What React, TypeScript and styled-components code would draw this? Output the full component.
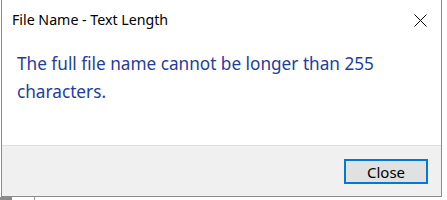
import React from 'react';
import styled, { createGlobalStyle } from 'styled-components';

const Global = createGlobalStyle`
  html, body {
    margin: 0;
    padding: 0;
    background: #ffffff;
  }
  body {
    font-family: 'Noto Sans', 'Open Sans', sans-serif;
  }
`;

const Page = styled.div`
  width: 447px;
  height: 200px;
  overflow: hidden;
  display: flex;
  flex-direction: column;
  background: #ffffff;
`;

const Dialog = styled.div`
  width: 441px;
  margin-left: 1px;
  height: 197px;
  box-sizing: border-box;
  border: 1px solid #8c8c8c;
  border-top: none;
  display: flex;
  flex-direction: column;
  background: #ffffff;
`;

const TitleBar = styled.div`
  height: 40px;
  display: flex;
  align-items: center;
  justify-content: space-between;
  padding: 0 14px 0 10px;
`;

const Title = styled.span`
  font-size: 14.2px;
  color: #000000;
  padding-bottom: 1px;
`;

const CloseX = styled.svg`
  width: 13px;
  height: 13px;
  display: block;
`;

const Body = styled.div`
  flex: 1;
  padding: 10px 20px 0 15px;
`;

const Instruction = styled.p`
  margin: 0;
  max-width: 380px;
  font-size: 17.2px;
  line-height: 28px;
  color: #1f3c9e;
`;

const Footer = styled.div`
  height: 50px;
  background: #f0f0f0;
  border-top: 1px solid #dfdfdf;
  display: flex;
  align-items: center;
  justify-content: flex-end;
  padding: 0 13px 0 0;
`;

const Button = styled.button`
  width: 84px;
  height: 25px;
  box-sizing: border-box;
  border: 2px solid #0078d7;
  background: #e1e1e1;
  font-family: inherit;
  font-size: 15px;
  color: #000000;
  padding: 0;
  margin-top: 1px;
`;

const Backdrop = styled.div`
  flex: 1;
  display: flex;
`;

const Strip = styled.div`
  width: 12px;
  background: #8a8a8a;
`;

const Gap = styled.div`
  width: 22px;
  border-right: 1px solid #9a9a9a;
`;

const App = () => (
  <>
    <Global />
    <Page>
      <Dialog>
        <TitleBar>
          <Title>File Name - Text Length</Title>
          <CloseX viewBox="0 0 13 13">
            <path d="M0.5 0.5 L12.5 12.5 M12.5 0.5 L0.5 12.5" stroke="#000" strokeWidth="1" fill="none" />
          </CloseX>
        </TitleBar>
        <Body>
          <Instruction>The full file name cannot be longer than 255 characters.</Instruction>
        </Body>
        <Footer>
          <Button>Close</Button>
        </Footer>
      </Dialog>
      <Backdrop>
        <Strip />
        <Gap />
      </Backdrop>
    </Page>
  </>
);

export default App;
